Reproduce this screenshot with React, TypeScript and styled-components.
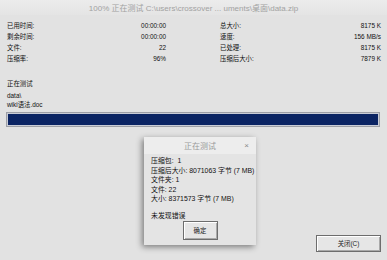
import React from 'react';
import styled, { createGlobalStyle } from 'styled-components';

const GlobalStyle = createGlobalStyle`
  html, body {
    margin: 0;
    padding: 0;
    background: #e2e2e2;
  }
  body {
    font-family: "Liberation Sans", "Noto Sans CJK SC", sans-serif;
    color: #111;
  }
`;

const Window = styled.div`
  position: relative;
  width: 387px;
  height: 260px;
  display: flex;
  flex-direction: column;
  background: #e2e2e2;
  overflow: hidden;
`;

const TitleBar = styled.div`
  height: 15px;
  display: flex;
  align-items: center;
  justify-content: center;
  font-size: 8px;
  color: #a2a2a2;
  background: linear-gradient(#ececec, #e4e4e4);
`;

const Body = styled.div`
  flex: 1;
  display: flex;
  flex-direction: column;
  padding: 5px 6px 8px 7px;
  font-size: 6.4px;
`;

const StatsGrid = styled.div`
  display: grid;
  grid-template-columns: 159px 161px;
  column-gap: 54px;
  grid-auto-rows: 11px;
`;

const StatRow = styled.div`
  display: flex;
  align-items: center;
  justify-content: space-between;
`;

const SectionLabel = styled.div`
  margin-top: 15px;
  height: 10px;
  line-height: 10px;
`;

const FilePath = styled.div`
  margin-top: 2px;
  line-height: 9px;
`;

const ProgressTrack = styled.div`
  margin: 3px 0 0 -1px;
  width: 374px;
  height: 15px;
  box-sizing: border-box;
  border: 1px solid #9d9fa6;
  padding: 1px;
  background: #c9ccd6;
`;

const ProgressFill = styled.div`
  height: 100%;
  background: #0b2463;
`;

const Footer = styled.div`
  margin-top: auto;
  display: flex;
  justify-content: flex-end;
`;

const PushButton = styled.button<{ $w: number; $h: number }>`
  width: ${p => p.$w}px;
  height: ${p => p.$h}px;
  padding: 0;
  font-family: inherit;
  font-size: 6.4px;
  color: #222;
  background: #e6e6e6;
  border: 1px solid #6d6d6d;
  box-shadow: inset 1px 1px 0 #ffffff, inset -1px -1px 0 #a9a9a9;
  display: flex;
  align-items: center;
  justify-content: center;
`;

const Dialog = styled.div`
  position: absolute;
  left: 144px;
  top: 137px;
  width: 112px;
  height: 108px;
  background: #e4e4e4;
  box-shadow: -2px 2px 6px rgba(0, 0, 0, 0.45);
  display: flex;
  flex-direction: column;
`;

const DialogTitle = styled.div`
  position: relative;
  height: 17px;
  display: flex;
  align-items: center;
  justify-content: center;
  font-size: 8px;
  color: #9a9a9a;
  background: #ededed;
`;

const CloseMark = styled.span`
  position: absolute;
  right: 7px;
  top: 4px;
  font-size: 8px;
  color: #8a8a8a;
`;

const DialogBody = styled.div`
  flex: 1;
  display: flex;
  flex-direction: column;
  padding: 2px 0 0 7px;
  font-size: 6.9px;
  color: #111;
`;

const InfoLine = styled.div<{ $gap?: number }>`
  line-height: 9.5px;
  margin-top: ${p => p.$gap ?? 0}px;
  white-space: nowrap;
`;

const DialogActions = styled.div`
  margin-top: 1px;
  padding-right: 7px;
  display: flex;
  justify-content: center;
`;

const leftStats = [
  ['已用时间:', '00:00:00'],
  ['剩余时间:', '00:00:00'],
  ['文件:', '22'],
  ['压缩率:', '96%'],
];

const rightStats = [
  ['总大小:', '8175 K'],
  ['速度:', '156 MB/s'],
  ['已处理:', '8175 K'],
  ['压缩后大小:', '7879 K'],
];

export default function App() {
  const rows = leftStats.flatMap((l, i) => [l, rightStats[i]]);

  return (
    <>
      <GlobalStyle />
      <Window>
        <TitleBar>100% 正在测试 C:\users\crossover ... uments\桌面\data.zip</TitleBar>
        <Body>
          <StatsGrid>
            {rows.map(([label, value], i) => (
              <StatRow key={i}>
                <span>{label}</span>
                <span>{value}</span>
              </StatRow>
            ))}
          </StatsGrid>

          <SectionLabel>正在测试</SectionLabel>
          <FilePath>
            data\
            <br />
            wiki语法.doc
          </FilePath>

          <ProgressTrack>
            <ProgressFill style={{ width: '100%' }} />
          </ProgressTrack>

          <Footer>
            <PushButton $w={65} $h={17}>关闭(C)</PushButton>
          </Footer>
        </Body>

        <Dialog>
          <DialogTitle>
            正在测试
            <CloseMark>×</CloseMark>
          </DialogTitle>
          <DialogBody>
            <InfoLine>压缩包:&nbsp; 1</InfoLine>
            <InfoLine>压缩后大小: 8071063 字节 (7 MB)</InfoLine>
            <InfoLine>文件夹: 1</InfoLine>
            <InfoLine>文件: 22</InfoLine>
            <InfoLine>大小: 8371573 字节 (7 MB)</InfoLine>
            <InfoLine $gap={7}>未发现错误</InfoLine>
            <DialogActions>
              <PushButton $w={35} $h={19}>确定</PushButton>
            </DialogActions>
          </DialogBody>
        </Dialog>
      </Window>
    </>
  );
}
